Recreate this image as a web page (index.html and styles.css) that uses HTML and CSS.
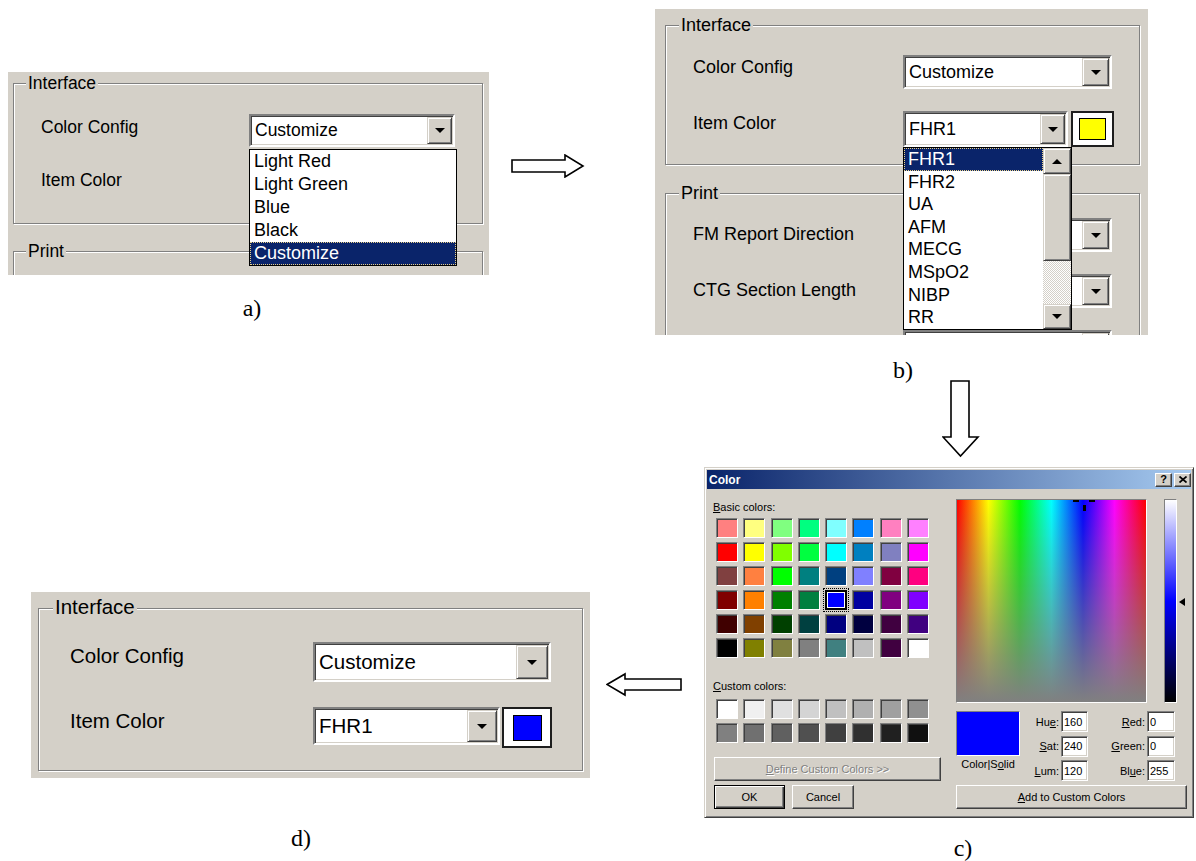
FILE: index.html
```html
<!DOCTYPE html>
<html>
<head>
<meta charset="utf-8">
<link rel="stylesheet" href="styles.css">
</head>
<body>
<div class="row row-top">
  <figure class="fig fig-a">
    <div class="win win-a">
      <div class="group ga-int">
        <span class="legend">Interface</span>
        <div class="form form-a">
          <span class="flabel">Color Config</span>
          <div class="combo ca1"><span class="val">Customize</span><span class="dbtn"><i class="tri"></i></span></div>
          <span class="flabel">Item Color</span>
          <div class="empty"></div>
        </div>
      </div>
      <div class="group ga-print"><span class="legend">Print</span></div>
      <ul class="list la">
        <li>Light Red</li>
        <li>Light Green</li>
        <li>Blue</li>
        <li>Black</li>
        <li class="hl">Customize</li>
      </ul>
    </div>
    <figcaption class="cap cap-a">a)</figcaption>
  </figure>

  <svg class="arrow arrow-r" width="74" height="24" viewBox="0 0 74 24"><path d="M1 6H54V1L72 12L54 23V18H1Z" fill="#fff" stroke="#000" stroke-width="1.6" stroke-linejoin="miter"/></svg>

  <figure class="fig fig-b">
    <div class="win win-b">
      <div class="group gb-int">
        <span class="legend">Interface</span>
        <div class="form form-b">
          <span class="flabel">Color Config</span>
          <div class="combo cb1"><span class="val">Customize</span><span class="dbtn"><i class="tri"></i></span></div>
          <span class="flabel">Item Color</span>
          <div class="swrow">
            <div class="combo cb2"><span class="val">FHR1</span><span class="dbtn"><i class="tri"></i></span></div>
            <div class="swatch sw-b"><i></i></div>
          </div>
        </div>
      </div>
      <div class="group gb-print">
        <span class="legend">Print</span>
        <div class="form form-b form-bp">
          <span class="flabel">FM Report Direction</span>
          <div class="combo cb1"><span class="val"></span><span class="dbtn"><i class="tri"></i></span></div>
          <span class="flabel">CTG Section Length</span>
          <div class="combo cb1"><span class="val"></span><span class="dbtn"><i class="tri"></i></span></div>
          <span class="flabel"></span>
          <div class="combo cb1"><span class="val"></span><span class="dbtn"><i class="tri"></i></span></div>
        </div>
      </div>
      <div class="list lb">
        <ul class="items">
          <li class="hl">FHR1</li>
          <li>FHR2</li>
          <li>UA</li>
          <li>AFM</li>
          <li>MECG</li>
          <li>MSpO2</li>
          <li>NIBP</li>
          <li>RR</li>
        </ul>
        <div class="sb">
          <span class="sbtn sb-up"><i class="tri-up"></i></span>
          <span class="sbtn sb-thumb"></span>
          <span class="sb-track"></span>
          <span class="sbtn sb-down"><i class="tri"></i></span>
        </div>
      </div>
    </div>
    <figcaption class="cap cap-b">b)</figcaption>
  </figure>
</div>

<div class="row row-mid">
  <svg class="arrow arrow-d" width="38" height="78" viewBox="0 0 38 78"><path d="M9 1H27V57H36L18.5 76L1 57H9Z" fill="#fff" stroke="#000" stroke-width="1.6"/></svg>
</div>

<div class="row row-bottom">
  <figure class="fig fig-d">
    <div class="win win-d">
      <div class="group gd-int">
        <span class="legend">Interface</span>
        <div class="form form-d">
          <span class="flabel">Color Config</span>
          <div class="combo cd1"><span class="val">Customize</span><span class="dbtn"><i class="tri"></i></span></div>
          <span class="flabel">Item Color</span>
          <div class="swrow swrow-d">
            <div class="combo cd2"><span class="val">FHR1</span><span class="dbtn"><i class="tri"></i></span></div>
            <div class="swatch sw-d"><i></i></div>
          </div>
        </div>
      </div>
    </div>
    <figcaption class="cap cap-d">d)</figcaption>
  </figure>

  <svg class="arrow arrow-l" width="77" height="25" viewBox="0 0 77 25"><path d="M1 12.5L19 2V7H75V18H19V23Z" fill="#fff" stroke="#000" stroke-width="1.6"/></svg>

  <figure class="fig fig-c">
    <div class="dialog">
      <div class="titlebar">
        <span class="title">Color</span>
        <div class="tbtns">
          <span class="tbtn">?</span>
          <span class="tbtn"><svg width="8" height="7" viewBox="0 0 8 7"><path d="M0.5 0.5L7.5 6.5M7.5 0.5L0.5 6.5" stroke="#000" stroke-width="1.7"/></svg></span>
        </div>
      </div>
      <div class="dbody">
        <div class="dleft">
          <div class="dlabel"><u>B</u>asic colors:</div>
          <div class="cells basic">
            <span class="cell" style="background:#ff8080"></span><span class="cell" style="background:#ffff80"></span><span class="cell" style="background:#80ff80"></span><span class="cell" style="background:#00ff80"></span><span class="cell" style="background:#80ffff"></span><span class="cell" style="background:#0080ff"></span><span class="cell" style="background:#ff80c0"></span><span class="cell" style="background:#ff80ff"></span>
            <span class="cell" style="background:#ff0000"></span><span class="cell" style="background:#ffff00"></span><span class="cell" style="background:#80ff00"></span><span class="cell" style="background:#00ff40"></span><span class="cell" style="background:#00ffff"></span><span class="cell" style="background:#0080c0"></span><span class="cell" style="background:#8080c0"></span><span class="cell" style="background:#ff00ff"></span>
            <span class="cell" style="background:#804040"></span><span class="cell" style="background:#ff8040"></span><span class="cell" style="background:#00ff00"></span><span class="cell" style="background:#008080"></span><span class="cell" style="background:#004080"></span><span class="cell" style="background:#8080ff"></span><span class="cell" style="background:#800040"></span><span class="cell" style="background:#ff0080"></span>
            <span class="cell" style="background:#800000"></span><span class="cell" style="background:#ff8000"></span><span class="cell" style="background:#008000"></span><span class="cell" style="background:#008040"></span><span class="cell sel" style="background:#0000ff"></span><span class="cell" style="background:#0000a0"></span><span class="cell" style="background:#800080"></span><span class="cell" style="background:#8000ff"></span>
            <span class="cell" style="background:#400000"></span><span class="cell" style="background:#804000"></span><span class="cell" style="background:#004000"></span><span class="cell" style="background:#004040"></span><span class="cell" style="background:#000080"></span><span class="cell" style="background:#000040"></span><span class="cell" style="background:#400040"></span><span class="cell" style="background:#400080"></span>
            <span class="cell" style="background:#000000"></span><span class="cell" style="background:#808000"></span><span class="cell" style="background:#808040"></span><span class="cell" style="background:#808080"></span><span class="cell" style="background:#408080"></span><span class="cell" style="background:#c0c0c0"></span><span class="cell" style="background:#400040"></span><span class="cell" style="background:#ffffff"></span>
          </div>
          <div class="dlabel custom-label"><u>C</u>ustom colors:</div>
          <div class="cells custom">
            <span class="cell" style="background:#ffffff"></span><span class="cell" style="background:#f0f0f0"></span><span class="cell" style="background:#e0e0e0"></span><span class="cell" style="background:#d4d4d4"></span><span class="cell" style="background:#c0c0c0"></span><span class="cell" style="background:#b0b0b0"></span><span class="cell" style="background:#a0a0a0"></span><span class="cell" style="background:#909090"></span>
            <span class="cell" style="background:#808080"></span><span class="cell" style="background:#707070"></span><span class="cell" style="background:#606060"></span><span class="cell" style="background:#505050"></span><span class="cell" style="background:#404040"></span><span class="cell" style="background:#303030"></span><span class="cell" style="background:#202020"></span><span class="cell" style="background:#101010"></span>
          </div>
          <div class="wbtn define"><span><u>D</u>efine Custom Colors &gt;&gt;</span></div>
          <div class="okrow">
            <div class="wbtn ok">OK</div>
            <div class="wbtn cancel">Cancel</div>
          </div>
        </div>
        <div class="dright">
          <div class="specrow">
            <div class="spectrum">
              <span class="ch ch1"></span><span class="ch ch2"></span><span class="ch ch3"></span>
            </div>
            <div class="lumbar"></div>
            <div class="lumarrow"></div>
          </div>
          <div class="vals">
            <div class="solidcol">
              <div class="solid"></div>
              <div class="solidlbl">Color|S<u>o</u>lid</div>
            </div>
            <span class="vlabel">Hu<u>e</u>:</span><span class="field">160</span>
            <span class="vlabel"><u>R</u>ed:</span><span class="field">0</span>
            <span class="vlabel"><u>S</u>at:</span><span class="field">240</span>
            <span class="vlabel"><u>G</u>reen:</span><span class="field">0</span>
            <span class="vlabel"><u>L</u>um:</span><span class="field">120</span>
            <span class="vlabel">Bl<u>u</u>e:</span><span class="field">255</span>
          </div>
          <div class="wbtn add"><u>A</u>dd to Custom Colors</div>
        </div>
      </div>
    </div>
    <figcaption class="cap cap-c">c)</figcaption>
  </figure>
</div>
</body>
</html>
```

FILE: styles.css
```css
html, body {
  margin: 0;
  padding: 0;
  background: #fff;
  overflow: hidden;
}
body {
  width: 1196px;
  height: 861px;
  font-family: "Liberation Sans", Arial, sans-serif;
  color: #000;
}
.row { display: flex; align-items: flex-start; }
.row-top { height: 380px; }
.row-mid { height: 78px; }
.fig { margin: 0; }
.arrow { display: block; flex: none; }
.cap {
  font-family: "Liberation Serif", "Times New Roman", serif;
  font-size: 24px;
  line-height: 24px;
  text-align: center;
}

/* placement of the four panels */
.fig-a { margin: 72px 0 0 8px; width: 481px; flex: none; }
.win-a { height: 203px; }
.cap-a { margin-top: 21px; padding-left: 7px; }
.arrow-r { margin: 154px 0 0 22px; }
.fig-b { margin: 9px 0 0 70px; width: 493px; flex: none; }
.win-b { height: 326px; }
.cap-b { margin-top: 23px; padding-left: 3px; }
.arrow-d { margin-left: 942px; }
.fig-d { margin: 134px 0 0 31px; width: 559px; flex: none; }
.win-d { height: 186px; }
.cap-d { margin-top: 48px; padding-right: 19px; }
.arrow-l { margin: 214px 0 0 16px; }
.fig-c { margin: 9px 0 0 21px; width: 490px; flex: none; }
.cap-c { margin-top: 18px; padding-left: 28px; }

/* classic window surfaces */
.win {
  position: relative;
  background: #d4d0c8;
  overflow: hidden;
}
.group {
  position: relative;
  box-sizing: border-box;
  border: 1px solid #808080;
  box-shadow: 1px 1px 0 #fff, inset 1px 1px 0 #fff;
}
.legend {
  position: absolute;
  background: #d4d0c8;
  padding: 0 2px;
  white-space: nowrap;
  line-height: 20px;
}
.form { display: grid; align-items: start; justify-items: start; }
.flabel { white-space: nowrap; line-height: 20px; }

.combo {
  box-sizing: border-box;
  display: flex;
  align-items: stretch;
  background: #fff;
  border: 2px solid;
  border-color: #808080 #fff #fff #808080;
  box-shadow: inset 1px 1px 0 #404040, inset -1px -1px 0 #d4d0c8;
  padding: 1px;
}
.val {
  flex: 1;
  display: flex;
  align-items: center;
  padding-left: 3px;
  white-space: nowrap;
  overflow: hidden;
}
.dbtn, .sbtn {
  box-sizing: border-box;
  background: #d4d0c8;
  border: 1px solid;
  border-color: #d4d0c8 #404040 #404040 #d4d0c8;
  box-shadow: inset 1px 1px 0 #fff, inset -1px -1px 0 #808080;
  display: flex;
  align-items: center;
  justify-content: center;
}
.tri {
  width: 0; height: 0;
  border-left: 5px solid transparent;
  border-right: 5px solid transparent;
  border-top: 5px solid #000;
}
.tri-up {
  width: 0; height: 0;
  border-left: 5px solid transparent;
  border-right: 5px solid transparent;
  border-bottom: 5px solid #000;
}
.swrow { display: flex; align-items: flex-start; gap: 3px; }
.swatch {
  box-sizing: border-box;
  border: 2px solid #1e1e1e;
  background: #fff;
  display: flex;
  align-items: center;
  justify-content: center;
}
.swatch i { box-sizing: border-box; border: 1px solid #000; display: block; }

.list {
  position: absolute;
  margin: 0;
  padding: 0;
  list-style: none;
  background: #fff;
  border: 1px solid #000;
  box-sizing: border-box;
}
.list li { padding-left: 4px; white-space: nowrap; }
.hl {
  background: #0a246a;
  color: #fff;
  outline: 1px dotted #e8d088;
  outline-offset: -1px;
}

/* panel a */
.win-a { font-size: 17.5px; }
.ga-int { margin: 11px 6px 0 5px; height: 141px; padding: 30px 0 0 27px; }
.win-a .legend { top: -11px; left: 12px; }
.form-a { grid-template-columns: 208px 206px; row-gap: 20px; }
.form-a .flabel { margin-top: 3px; }
.ca1 { width: 206px; height: 33px; }
.ca1 .dbtn { width: 25px; }
.empty { height: 33px; }
.ga-print { margin: 27px 6px 0 5px; height: 100px; }
.la { left: 241px; top: 77px; width: 208px; height: 117px; }
.la li { height: 23px; line-height: 23px; font-size: 18px; }

/* panel b */
.win-b { font-size: 18px; }
.gb-int { margin: 16px 8px 0 10px; height: 140px; padding: 29px 0 0 27px; }
.win-b .legend { top: -11px; left: 13px; }
.form-b { grid-template-columns: 210px auto; row-gap: 22px; }
.form-b .flabel { margin-top: 2px; }
.form-bp .flabel { margin-top: 6px; }
.cb1 { width: 209px; height: 34px; }
.cb1 .dbtn { width: 27px; }
.cb2 { width: 165px; height: 36px; }
.cb2 .dbtn { width: 25px; }
.sw-b { width: 43px; height: 36px; }
.sw-b i { width: 27px; height: 22px; background: #ffff00; }
.gb-print { margin: 28px 8px 0 10px; height: 200px; padding: 24px 0 0 27px; }
.lb { left: 248px; top: 138px; width: 169px; height: 183px; display: flex; }
.items { flex: 1; margin: 0; padding: 0; list-style: none; }
.items li { height: 22.6px; line-height: 22.6px; font-size: 18px; }
.sb { width: 28px; display: flex; flex-direction: column; }
.sb-up { height: 26px; }
.sb-thumb { height: 87px; }
.sb-track {
  flex: 1;
  background: repeating-conic-gradient(#ffffff 0 25%, #d4d0c8 0 50%) 0 0 / 2px 2px;
}
.sb-down { height: 25px; }

/* panel d */
.win-d { font-size: 20.5px; }
.gd-int { margin: 16px 7px 0 7px; height: 163px; padding: 33px 0 0 31px; }
.win-d .legend { top: -14px; left: 14px; line-height: 24px; }
.form-d { grid-template-columns: 243px auto; row-gap: 25px; }
.form-d .flabel { margin-top: 2px; line-height: 24px; }
.cd1 { width: 238px; height: 40px; }
.cd1 .dbtn { width: 32px; }
.cd2 { width: 187px; height: 38px; }
.cd2 .dbtn { width: 30px; }
.swrow-d { gap: 2px; }
.sw-d { width: 50px; height: 41px; }
.sw-d i { width: 29px; height: 26px; background: #0000ff; }

/* panel c: colour dialog */
.dialog {
  box-sizing: border-box;
  width: 490px;
  height: 351px;
  background: #d4d0c8;
  border: 1px solid;
  border-color: #d4d0c8 #404040 #404040 #d4d0c8;
  box-shadow: inset 1px 1px 0 #fff, inset -1px -1px 0 #808080;
  padding: 2px;
  font-size: 11px;
}
.titlebar {
  height: 19px;
  background: linear-gradient(to right, #0a246a, #a6caf0);
  display: flex;
  align-items: center;
  justify-content: space-between;
  padding: 0 0 0 2px;
}
.title { color: #fff; font-weight: bold; font-size: 12px; }
.tbtns { display: flex; gap: 2px; }
.tbtn {
  box-sizing: border-box;
  width: 17px;
  height: 14px;
  background: #d4d0c8;
  border: 1px solid;
  border-color: #fff #404040 #404040 #fff;
  box-shadow: inset -1px -1px 0 #808080;
  display: flex;
  align-items: center;
  justify-content: center;
  font-weight: bold;
  font-size: 11px;
  line-height: 1;
}
.dbody { display: flex; gap: 15px; padding: 10px 0 0 6px; }
.dleft { width: 228px; padding-top: 1.5px; }
.dlabel { line-height: 13px; height: 13px; white-space: nowrap; }
.cells {
  display: grid;
  grid-template-columns: repeat(8, 22px);
  grid-auto-rows: 20px;
  column-gap: 5.3px;
  row-gap: 4px;
  margin-left: 3px;
}
.basic { margin-top: 4.5px; }
.custom-label { margin-top: 21.5px; }
.custom { margin-top: 6.5px; }
.cell {
  box-sizing: border-box;
  border: 1px solid;
  border-color: #808080 #fff #fff #808080;
  box-shadow: inset 1px 1px 0 #404040;
}
.cell.sel {
  border: 2px solid #000;
  box-shadow: inset 0 0 0 1px #fff;
  outline: 1px dotted #000;
  outline-offset: 1px;
}
.wbtn {
  box-sizing: border-box;
  background: #d4d0c8;
  border: 1px solid;
  border-color: #fff #404040 #404040 #fff;
  box-shadow: inset -1px -1px 0 #808080;
  display: flex;
  align-items: center;
  justify-content: center;
  white-space: nowrap;
}
.define {
  margin: 14px 0 0 1px;
  width: 227px;
  height: 24px;
  color: #808080;
  text-shadow: 1px 1px 0 #fff;
}
.okrow { display: flex; gap: 7px; margin: 4px 0 0 1px; }
.ok {
  width: 71px;
  height: 24px;
  border-color: #000;
  box-shadow: inset 1px 1px 0 #fff, inset -1px -1px 0 #404040, inset -2px -2px 0 #808080;
}
.cancel { width: 62px; height: 24px; }
.dright { width: 231px; }
.specrow { display: flex; align-items: flex-start; height: 204px; }
.spectrum {
  position: relative;
  box-sizing: border-box;
  width: 191px;
  height: 204px;
  border: 1px solid;
  border-color: #808080 #fff #fff #808080;
  background:
    linear-gradient(to bottom, rgba(128,128,128,0), #808080),
    linear-gradient(to right, #ff0000, #ffff00, #00ff00, #00ffff, #0000ff, #ff00ff, #ff0000);
}
.ch { position: absolute; background: #000; }
.ch1 { left: 116px; top: 0; width: 6px; height: 2px; }
.ch2 { left: 132px; top: 0; width: 6px; height: 2px; }
.ch3 { left: 126px; top: 5px; width: 3px; height: 6px; }
.lumbar {
  box-sizing: border-box;
  margin-left: 17px;
  width: 13px;
  height: 204px;
  border: 1px solid;
  border-color: #808080 #fff #fff #808080;
  background: linear-gradient(#ffffff, #0000ff 50%, #000000);
}
.lumarrow {
  margin: 99px 0 0 2px;
  width: 0;
  height: 0;
  border-top: 4px solid transparent;
  border-bottom: 4px solid transparent;
  border-right: 6px solid #000;
}
.vals {
  margin-top: 8px;
  display: grid;
  grid-template-columns: 64px 37px 27px 55px 28px;
  grid-template-rows: 21px 21px 21px;
  column-gap: 2px;
  row-gap: 3.5px;
}
.solidcol { grid-column: 1; grid-row: 1 / span 3; }
.solid {
  box-sizing: border-box;
  width: 64px;
  height: 45px;
  background: #0000ff;
  border: 1px solid;
  border-color: #808080 #fff #fff #808080;
}
.solidlbl { margin-top: 2px; line-height: 13px; text-align: center; white-space: nowrap; }
.vlabel { align-self: center; text-align: right; white-space: nowrap; }
.field {
  box-sizing: border-box;
  background: #fff;
  border: 1px solid;
  border-color: #808080 #fff #fff #808080;
  box-shadow: inset 1px 1px 0 #404040, inset -1px -1px 0 #d4d0c8;
  padding-left: 2px;
  display: flex;
  align-items: center;
}
.add { margin-top: 4px; width: 231px; height: 24px; }
```
